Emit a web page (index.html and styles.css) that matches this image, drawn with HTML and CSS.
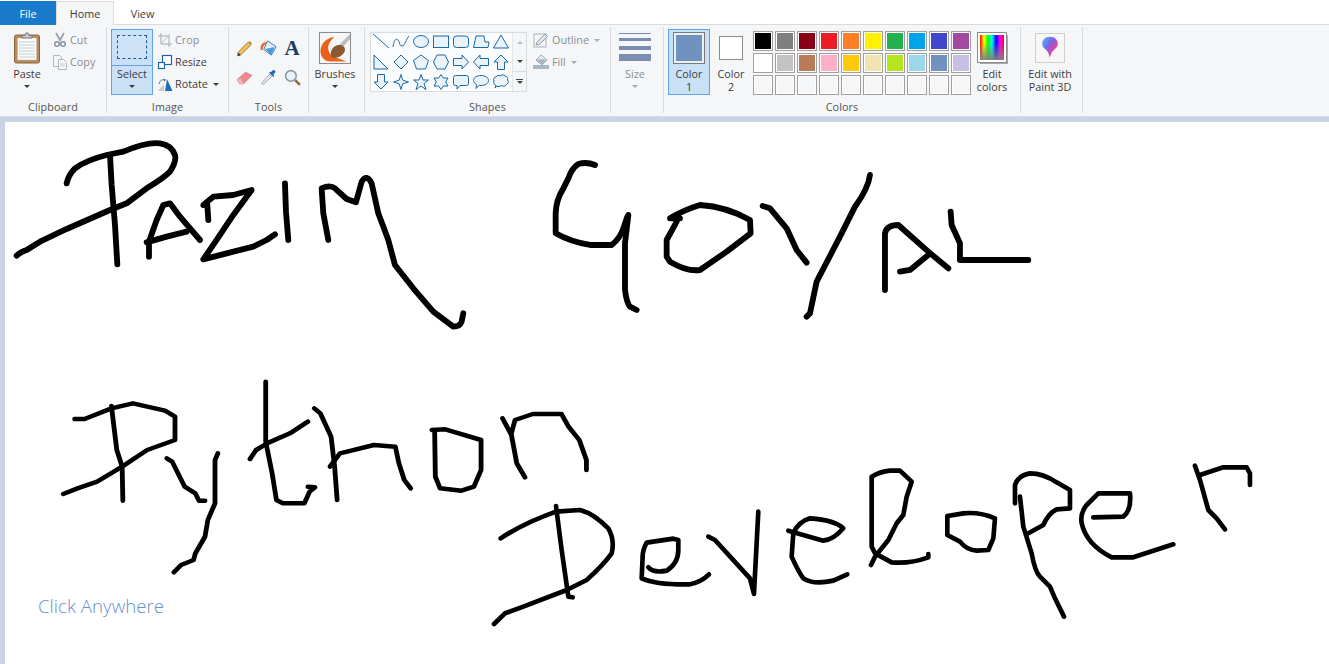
FILE: index.html
```html
<!DOCTYPE html>
<html lang="en">
<head>
<meta charset="utf-8">
<title>Untitled - Paint</title>
<link rel="stylesheet" href="styles.css">
</head>
<body>
<div class="app">
  <nav class="tabs">
    <div class="tab tab-file">File</div>
    <div class="tab tab-home">Home</div>
    <div class="tab tab-view">View</div>
  </nav>
  <div class="ribbon">
    <section class="group g-clipboard">
      <div class="group-body">
        <div class="big">
          <div class="big-icon">
            <svg width="28" height="32" viewBox="0 0 28 32"><rect x="1.500" y="3" width="25" height="28" rx="2" fill="#b98a5c" stroke="#8a6238"/><rect x="4.500" y="6" width="19" height="22" fill="#fbfbf8" stroke="#b9b9b0" stroke-width=".5"/><path d="M6 10h16M6 13h16M6 16h16M6 19h16M6 22h16M6 25h16" stroke="#c3ccd6"/><path d="M9 6V3.500h3L13 1h2l1 2.500h3V6z" fill="#c9ced4" stroke="#777"/></svg>
          </div>
          <div class="big-label">Paste</div>
          <i class="caret"></i>
        </div>
        <div class="small-col">
          <div class="small off"><svg class="ic" viewBox="0 0 16 16"><path d="M4 1l4.500 8M12 1L7.500 9" stroke="#9aa3ad" stroke-width="1.800" fill="none"/><circle cx="5" cy="12" r="2.300" fill="none" stroke="#8a95a1" stroke-width="1.500"/><circle cx="11" cy="12" r="2.300" fill="none" stroke="#8a95a1" stroke-width="1.500"/></svg><span>Cut</span></div>
          <div class="small off"><svg class="ic" viewBox="0 0 16 16"><path d="M1.500 1.500h6l2 2v9h-8z" fill="#f4f5f6" stroke="#aeb6bf"/><path d="M6.500 5.500h5l3 3v7h-8z" fill="#fafafa" stroke="#aeb6bf"/><path d="M8 10h5M8 12h5" stroke="#c4cad0"/></svg><span>Copy</span></div>
        </div>
      </div>
      <div class="group-label">Clipboard</div>
    </section>

    <section class="group g-image">
      <div class="group-body">
        <div class="big active">
          <div class="big-icon select-top"><div class="dash"></div></div>
          <div class="big-label">Select</div>
          <i class="caret"></i>
        </div>
        <div class="small-col">
          <div class="small off"><svg class="ic" viewBox="0 0 16 16"><path d="M4 1v11h11M1 4h11v11" fill="none" stroke="#9fa9b5"/><path d="M4 12L13 2" stroke="#b7bec7"/></svg><span>Crop</span></div>
          <div class="small"><svg class="ic" viewBox="0 0 16 16"><rect x="5.500" y="1.500" width="9" height="9" fill="#fff" stroke="#1e63a4" stroke-width="1.200"/><rect x="1.500" y="8.500" width="6" height="6" fill="#fff" stroke="#1e63a4" stroke-width="1.200"/></svg><span>Resize</span></div>
          <div class="small"><svg class="ic" viewBox="0 0 16 16"><path d="M1 15L7 8v7z" fill="#c7ccc9"/><path d="M10 3l5.500 12H8z" fill="#1f6fb5"/><path d="M2 8C3 4 6 3 8 4" fill="none" stroke="#2a6ea8"/><path d="M7 2.500l2 1.500-2 1.500z" fill="#2a6ea8"/></svg><span>Rotate</span><i class="caret caret-inline"></i></div>
        </div>
      </div>
      <div class="group-label">Image</div>
    </section>

    <section class="group g-tools">
      <div class="group-body">
        <div class="tool-grid">
          <svg class="tool" viewBox="0 0 16 16"><path d="M2 11.500L11.500 2l2.500 2.500L4.500 14 1.500 15z" fill="#f2c14e" stroke="#8c6b2a" stroke-width=".8"/><path d="M11.500 2l2.500 2.500 1-1.500-2-2z" fill="#d9795f"/><path d="M1.500 15l.8-3 2.200 2z" fill="#333"/></svg>
          <svg class="tool" viewBox="0 0 18 18"><path d="M8 1l9 6-5 9-8-6z" fill="#e6f0f8" stroke="#2c78b7"/><path d="M5.500 9.500l10-2-3.500 8.500z" fill="#4f9bd6"/><path d="M7 2C3 2 .5 5 .5 9c0 2.500 2.500 2.500 2.500 0 0-2 1.500-4 4-5z" fill="#e8662c"/></svg>
          <div class="tool tool-text">A</div>
          <svg class="tool" viewBox="0 0 16 16"><path d="M1 10l8-7 6 3-8 8H3.500z" fill="#ef8a90" stroke="#c96a70" stroke-width=".6"/><path d="M1 10l2.500 4H7L4.500 9z" fill="#f3b4b4"/></svg>
          <svg class="tool" viewBox="0 0 16 16"><path d="M2 14l-.5-.5L9 5l2 2-8 7.500z" fill="#e8eef2" stroke="#7a8a98" stroke-width=".7"/><path d="M8.500 3.500l4 4 1-1-1-1 2-2.500c.5-1-1-2.500-2-2L10 3l-.5-.5z" fill="#1c6db3"/></svg>
          <svg class="tool" viewBox="0 0 16 16"><circle cx="6.500" cy="6.500" r="5" fill="#e6f1fa" stroke="#8f9aa3" stroke-width="1.500"/><path d="M10.500 10.500L15 15" stroke="#8b6d45" stroke-width="2.400"/></svg>
        </div>
      </div>
      <div class="group-label">Tools</div>
    </section>

    <section class="group g-brushes">
      <div class="group-body">
        <div class="big">
          <div class="big-icon">
            <svg width="32" height="32" viewBox="0 0 32 32"><rect x=".5" y=".5" width="31" height="31" fill="#f6f6f6" stroke="#8c8c8c"/><path d="M15 5C7 6 1.500 12 1.500 19c0 6 4 10.500 10 10.500h16l-13-5c-5-3-6.500-8-4.500-12.500 1-2.500 3-4.500 5-7z" fill="#e9611c"/><path d="M31 2L19 14l3 3L31 7z" fill="#b9bec2"/><path d="M19 13c-5 1-8 6-7 11 .5 2 3 2.500 6 1.500 5-1 8-5 8-8 0-3-3-5-7-4.500z" fill="#8b5a32"/></svg>
          </div>
          <div class="big-label">Brushes</div>
          <i class="caret"></i>
        </div>
      </div>
      <div class="group-label"></div>
    </section>

    <section class="group g-shapes">
      <div class="group-body">
        <div class="gallery">
          <div class="gallery-grid">
            <svg class="shape" viewBox="0 0 16 16"><path d="M0 0L16 14"/></svg>
            <svg class="shape" viewBox="0 0 16 16"><path class="open" d="M0 13C1 6 3 4 5 6s1 6 4 6 4-7 7-10"/></svg>
            <svg class="shape" viewBox="0 0 16 16"><ellipse cx="8" cy="7.500" rx="7.500" ry="6"/></svg>
            <svg class="shape" viewBox="0 0 16 16"><rect x=".5" y="2" width="15" height="11.500"/></svg>
            <svg class="shape" viewBox="0 0 16 16"><rect x=".5" y="2" width="15" height="11.500" rx="3"/></svg>
            <svg class="shape" viewBox="0 0 16 16"><path d="M.5 13.500L3 2h8l1 6h4l-1 5.500z"/></svg>
            <svg class="shape" viewBox="0 0 16 16"><path d="M8 1l7.500 13H.5z"/></svg>
            <svg class="shape" viewBox="0 0 16 16"><path d="M1 1l14 14H1z"/></svg>
            <svg class="shape" viewBox="0 0 16 16"><path d="M8 1l7 7-7 7-7-7z"/></svg>
            <svg class="shape" viewBox="0 0 16 16"><path d="M8 1l7.500 5.500-3 8.500h-9l-3-8.500z"/></svg>
            <svg class="shape" viewBox="0 0 16 16"><path d="M4 1h8l3.500 7-3.500 7H4L.5 8z"/></svg>
            <svg class="shape" viewBox="0 0 16 16"><path d="M.5 4.500H9V1l6.500 7L9 15v-3.500H.5z"/></svg>
            <svg class="shape" viewBox="0 0 16 16"><path d="M15.500 4.500H7V1L.5 8 7 15v-3.500h8.500z"/></svg>
            <svg class="shape" viewBox="0 0 16 16"><path d="M4.500 15.500V8H1l7-7 7 7h-3.500v7.500z"/></svg>
            <svg class="shape" viewBox="0 0 16 16"><path d="M4.500.5V8H1l7 7 7-7h-3.500V.5z"/></svg>
            <svg class="shape" viewBox="0 0 16 16"><path d="M8 .5l1.800 5.700L15.500 8l-5.700 1.800L8 15.500l-1.800-5.700L.5 8l5.700-1.800z"/></svg>
            <svg class="shape" viewBox="0 0 16 16"><path d="M8 .5l2 5.500h5.500L11 9.500l2 6-5-3.500-5 3.500 2-6L.5 6H6z"/></svg>
            <svg class="shape" viewBox="0 0 16 16"><path d="M8 .5l2.300 3.500h4.700l-2.300 4 2.300 4h-4.700L8 15.500 5.700 12H1l2.300-4L1 4h4.700z"/></svg>
            <svg class="shape" viewBox="0 0 16 16"><path d="M2.500 1.500h11a2 2 0 0 1 2 2v6a2 2 0 0 1-2 2H7l-3 3.500v-3.500H2.500a2 2 0 0 1-2-2v-6a2 2 0 0 1 2-2z"/></svg>
            <svg class="shape" viewBox="0 0 16 16"><path d="M8 1.500c4 0 7.500 2 7.500 5s-3.500 5-7.500 5c-.8 0-1.500 0-2-.2L3 14.500l.5-4C1.500 9.500.5 8 .5 6.500c0-3 3.500-5 7.500-5z"/></svg>
            <svg class="shape" viewBox="0 0 16 16"><path d="M3 3c1-2 3-2 4-1 1-1.500 4-1.500 5 0 2 0 3.500 2 2.500 4 1.500 1 1 4-1 4.500-1 2-4 2-5.500 1-1 1-3 1.500-4 .5L2 14l1-2.500C1 11 0 8.500 1 7 0 5 1 3 3 3z"/></svg>
          </div>
          <div class="gallery-scroll">
            <span class="sc"><i class="tri-up"></i></span>
            <span class="sc"><i class="tri-down"></i></span>
            <span class="sc sc-more"><i class="more-bar"></i><i class="tri-down"></i></span>
          </div>
        </div>
        <div class="small-col outline-col">
          <div class="small off"><svg class="ic" viewBox="0 0 16 16"><rect x="1" y="2" width="12" height="13" fill="#f4f6f8" stroke="#a8b2bc"/><path d="M3 13l1-3 8-8 2.500 2.500-8 8z" fill="#dfe4e8" stroke="#94a0ab"/></svg><span>Outline</span><i class="caret caret-inline caret-off"></i></div>
          <div class="small off"><svg class="ic" viewBox="0 0 16 16"><path d="M8 1l6 5-5 5-6-5z" fill="#e8ecef" stroke="#9da8b3"/><path d="M0 11h16v4H0z" fill="#a9b6c4"/><path d="M3 6l6-1 4 1-4 5z" fill="#a9b6c4"/></svg><span>Fill</span><i class="caret caret-inline caret-off"></i></div>
        </div>
      </div>
      <div class="group-label">Shapes</div>
    </section>

    <section class="group g-size">
      <div class="group-body">
        <div class="big off">
          <div class="big-icon size-icon"><i class="sz s1"></i><i class="sz s2"></i><i class="sz s3"></i><i class="sz s4"></i></div>
          <div class="big-label">Size</div>
          <i class="caret caret-off"></i>
        </div>
      </div>
      <div class="group-label"></div>
    </section>

    <section class="group g-colors">
      <div class="group-body">
        <div class="big active">
          <div class="big-icon"><div class="swatch-1"></div></div>
          <div class="big-label">Color<br>1</div>
        </div>
        <div class="big">
          <div class="big-icon"><div class="swatch-2"></div></div>
          <div class="big-label">Color<br>2</div>
        </div>
        <div class="palette">
          <i class="cell c01"></i><i class="cell c02"></i><i class="cell c03"></i><i class="cell c04"></i><i class="cell c05"></i><i class="cell c06"></i><i class="cell c07"></i><i class="cell c08"></i><i class="cell c09"></i><i class="cell c10"></i>
          <i class="cell c11"></i><i class="cell c12"></i><i class="cell c13"></i><i class="cell c14"></i><i class="cell c15"></i><i class="cell c16"></i><i class="cell c17"></i><i class="cell c18"></i><i class="cell c19"></i><i class="cell c20"></i>
          <i class="cell"></i><i class="cell"></i><i class="cell"></i><i class="cell"></i><i class="cell"></i><i class="cell"></i><i class="cell"></i><i class="cell"></i><i class="cell"></i><i class="cell"></i>
        </div>
        <div class="big">
          <div class="big-icon"><div class="rainbow"></div></div>
          <div class="big-label">Edit<br>colors</div>
        </div>
      </div>
      <div class="group-label">Colors</div>
    </section>

    <section class="group g-3d">
      <div class="group-body">
        <div class="big big-wide">
          <div class="big-icon">
            <div class="p3d"><svg width="18" height="25" viewBox="0 0 22 28"><defs><linearGradient id="p3" x1="0" y1="0" x2="1" y2="1"><stop offset="0" stop-color="#3fc4ee"/><stop offset=".4" stop-color="#7a63ea"/><stop offset=".7" stop-color="#ee3f9c"/><stop offset="1" stop-color="#f5a623"/></linearGradient></defs><path d="M11 1c5.500 0 9.500 3.500 9.500 8.500 0 5-5 7-7.500 11-.8 1.500-1.500 3.500-2.500 6-.5-3-1-5-2-7C6 16 1.500 14 1.500 9.500 1.500 4.500 5.500 1 11 1z" fill="url(#p3)"/></svg></div>
          </div>
          <div class="big-label">Edit with<br>Paint 3D</div>
        </div>
      </div>
      <div class="group-label"></div>
    </section>
  </div>

  <main class="workspace">
    <div class="canvas">
      <svg class="drawing" width="1324" height="542" viewBox="5 122 1324 542">
        <g class="ink ink-5" transform="translate(0 125) scale(.3333)">
          <path d="M50 392Q60 382 80 375L120 350 200 312 330 255 380 235 440 190Q490 160 510 140 530 110 525 90 515 60 480 55 440 50 370 80L320 90Q260 105 225 130 205 150 200 175"/>
          <path d="M330 90L335 180 345 300 352 418"/>
          <path d="M447 395L447 350 470 285 490 240 510 235 540 275 600 345"/>
          <path d="M440 352L500 335 560 320"/>
          <path d="M625 285L622 240 610 240 640 215 700 210 755 195 700 270 650 345 610 403 680 385 760 365 800 345 825 328"/>
          <path d="M855 175L858 260 865 345"/>
          <path d="M985 345L970 265 965 190Q990 178 1005 190L1040 222 1068 232 1085 170Q1100 145 1115 175L1135 265 1165 345 1185 420 1240 490 1300 560 1360 605Q1380 605 1385 590L1390 565"/>
        </g>
        <g class="ink ink-5" transform="translate(540 150) scale(.3333)">
          <path d="M165 45Q140 35 115 42 95 55 85 85L70 115Q48 150 47 190L47 250Q90 275 150 285L215 285Q240 265 250 235L262 200"/>
          <path d="M265 195L255 280 255 420Q260 460 270 470L290 480"/>
          <path d="M420 205L390 205Q430 180 480 165 560 170 630 210L632 250 560 305 480 360Q440 365 390 335L380 320 380 270 410 215"/>
          <path d="M668 168L690 175 740 235 770 300 800 338"/>
          <path d="M990 75Q985 115 945 170L900 260 830 395 810 490 800 500"/>
          <path d="M1035 420L1035 250Q1040 225 1075 225L1165 305 1225 355"/>
          <path d="M1080 365L1110 360 1165 315"/>
          <path d="M1232 185L1235 225 1260 280 1260 330 1465 330"/>
        </g>
        <g class="ink ink-p" transform="translate(40 370) scale(.35714 .3333)">
          <path d="M97 147L125 147 200 115 260 100 350 122 378 140 378 210 300 240 230 290 160 335 105 355 65 372"/>
          <path d="M200 108L215 240 230 290 232 392"/>
          <path d="M355 265L370 275 405 350 435 370 445 392 462 392"/>
          <path d="M498 250L490 270 490 400 470 450 462 500 435 550 430 570 395 585 375 607"/>
          <path d="M632 35L632 215 650 310 662 390 680 400 740 400 755 365 770 352 750 350"/>
          <path d="M588 267L605 240 640 218 700 190 750 155"/>
          <path d="M768 115L785 130 815 200 825 290 832 390"/>
          <path d="M812 290L840 250 935 225 995 230 1005 280 1020 330 1038 355"/>
          <path d="M1097 180L1135 178 1235 210 1235 300 1215 350 1180 362 1120 355 1107 320 1105 180"/>
          <path d="M1295 145L1320 195 1335 280 1358 322"/>
          <path d="M1320 190L1330 150 1380 132 1460 132 1480 170 1510 210 1530 270 1530 300"/>
        </g>
        <g class="ink ink-4" transform="translate(480 450) scale(.3333)">
          <path d="M62 265Q130 220 228 185L300 180Q340 190 385 235 405 270 395 310 370 345 320 390L260 420 130 470 75 490 42 522"/>
          <path d="M228 168L245 300 265 440 278 442"/>
          <path d="M505 352Q520 370 560 362 595 340 595 300L595 270 580 266 500 278Q488 300 488 320L485 385Q530 405 630 403 665 395 687 373"/>
          <path d="M685 260L705 270 810 385 822 432 835 185"/>
          <path d="M925 242L1030 272Q1060 270 1090 235 1065 210 990 205 955 215 940 250L935 320Q955 365 970 385 1000 405 1060 392L1102 373"/>
        </g>
        <g class="ink ink-4" transform="translate(860 450) scale(.3333)">
          <path d="M205 312L205 322Q150 342 95 337L45 310 35 290 35 80Q60 65 90 62L120 62 155 95 140 140 130 195 110 220 85 270 45 320 33 345"/>
          <path d="M262 198L262 255 300 275Q320 300 350 302L385 300 400 265 405 205Q360 185 310 190L262 198"/>
          <path d="M465 160L465 105Q475 75 510 70 550 70 590 97L630 120 630 175 590 178Q565 190 550 225L505 250"/>
          <path d="M480 140L490 230 515 310Q525 365 540 380L570 410 585 445 612 500"/>
          <path d="M700 202L790 200Q815 180 810 130L715 130 680 165Q660 190 665 220 680 285 755 322L820 322 940 283"/>
          <path d="M1005 47L1020 90 1045 180 1070 205 1095 238"/>
          <path d="M1020 75L1090 52 1160 52 1170 70 1170 105"/>
        </g>
      </svg>
      <div class="click-anywhere">Click Anywhere</div>
    </div>
  </main>
</div>
</body>
</html>
```
FILE: styles.css
```css
* { box-sizing: border-box; }
html, body { margin: 0; padding: 0; height: 100%; overflow: hidden; }
body { font-family: "Open Sans", "Noto Sans", sans-serif; font-size: 10.8px; color: #3c3c3c; background: #fff; }
.app { display: flex; flex-direction: column; height: 100vh; }

/* tabs */
.tabs { display: flex; height: 25px; padding-top: 1px; background: #fff; border-bottom: 1px solid #dadbdc; flex: none; }
.tab { display: flex; align-items: center; justify-content: center; height: 24px; }
.tab-file { width: 56px; background: #1979ca; color: #fff; }
.tab-home { width: 58px; background: #f5f6f7; border: 1px solid #dadbdc; border-bottom: none; height: 24px; margin-bottom: -1px; }
.tab-view { width: 57px; }

/* ribbon */
.ribbon { display: flex; height: 91px; padding-top: 2px; background: #f5f6f7; flex: none; }
.group { display: flex; flex-direction: column; height: 86px; border-right: 1px solid #dadbdc; flex: none; }
.group-body { display: flex; height: 72px; padding-top: 2px; }
.group-label { height: 14px; line-height: 16px; text-align: center; color: #555; letter-spacing: .1px; }
.g-clipboard { width: 107px; }
.g-image { width: 122px; }
.g-tools { width: 80px; }
.g-brushes { width: 56px; }
.g-shapes { width: 246px; }
.g-size { width: 53px; }
.g-colors { width: 357px; }
.g-3d { width: 62px; }

.g-clipboard .group-body { padding-left: 6px; }
.g-clipboard .small-col { margin-left: 4px; }
.g-image .group-body { padding-left: 4px; }
.g-image .small-col { margin-left: 4px; }
.g-brushes .group-body { padding-left: 5px; }
.g-shapes .group-body { padding-left: 5px; }
.g-size .group-body { padding-left: 3px; }
.g-colors .group-body { padding-left: 4px; }

/* big buttons */
.big { display: flex; flex-direction: column; align-items: center; width: 42px; height: 66px; flex: none; }
.big-wide { width: 58px; }
.big-icon { display: flex; justify-content: center; align-items: center; width: 100%; height: 38px; padding-bottom: 1px; flex: none; }
.big-label { line-height: 13px; text-align: center; white-space: nowrap; }
.active { background: #c9e0f7; outline: 1px solid #62a3e6; outline-offset: -1px; }
.select-top { border-bottom: 1px solid #62a3e6; height: 37px; margin-bottom: 1px; padding-bottom: 0; }
.dash { width: 30px; height: 24px; border: 1px dashed #1d5c9c; background: #cfe3f8; }
.off { color: #8a8f96; }

.caret { display: block; width: 0; height: 0; margin-top: 5px; border-left: 3px solid transparent; border-right: 3px solid transparent; border-top: 3px solid #3c3c3c; }
.caret-off { border-top-color: #a5a9ae; }
.caret-inline { margin: 2px 0 0 5px; }

/* small rows */
.small-col { display: flex; flex-direction: column; flex: none; }
.small { display: flex; align-items: center; height: 22px; padding-bottom: 1px; }
.ic { width: 16px; height: 16px; margin-right: 2px; flex: none; }
.outline-col .ic { margin-right: 3px; }

/* tools */
.tool-grid { display: grid; grid-template-columns: repeat(3, 24px); grid-template-rows: repeat(2, 29px); margin: 5px 0 0 3px; place-items: center; }
.tool { width: 17px; height: 17px; }
.tool-text { font: bold 21px/17px "Liberation Serif", serif; color: #1e3a63; text-align: center; }

/* shapes */
.gallery { display: flex; width: 157px; height: 60px; margin-top: 3px; background: #fafcfd; border: 1px solid #dadbdc; flex: none; }
.gallery-grid { display: grid; grid-template-columns: repeat(7, 20px); grid-template-rows: repeat(3, 20px); align-content: center; place-items: center; height: 58px; width: 141px; }
.shape { width: 16px; height: 16px; overflow: visible; }
.shape path, .shape ellipse, .shape rect { fill: #eaf3fa; stroke: #1a69a8; stroke-width: 1; }
.shape .open { fill: none; }
.gallery-scroll { display: flex; flex-direction: column; flex: 1; border-left: 1px solid #e4e5e6; background: #f5f6f7; }
.sc { display: flex; flex-direction: column; align-items: center; justify-content: center; height: 19px; gap: 1px; }
.sc-more { border-top: 1px solid #dadbdc; height: 20px; }
.tri-up { width: 0; height: 0; border: 3px solid transparent; border-top: none; border-bottom: 3px solid #b8bcc0; }
.tri-down { width: 0; height: 0; border: 3px solid transparent; border-bottom: none; border-top: 3px solid #444; }
.more-bar { width: 7px; height: 1px; background: #444; }
.outline-col { margin-left: 6px; }

/* size */
.size-icon { flex-direction: column; justify-content: flex-start; align-items: center; padding: 4px 0 0; }
.sz { display: block; width: 32px; background: #7b8db0; flex: none; }
.s1 { height: 1px; }
.s2 { height: 3px; margin-top: 4px; }
.s3 { height: 4px; margin-top: 5px; }
.s4 { height: 7px; margin-top: 4px; }

/* colours */
.swatch-1 { width: 32px; height: 32px; background: #7092be; border: 3px solid #e9f1f9; outline: 1px solid #7a7a7a; outline-offset: -1px; }
.swatch-2 { width: 24px; height: 24px; background: #fff; border: 1px solid #8a8a8a; }
.palette { display: grid; grid-template-columns: repeat(10, 20px); grid-auto-rows: 20px; gap: 2px; margin: 2px 0 0 1px; height: 64px; flex: none; }
.cell { display: block; width: 20px; height: 20px; border: 1px solid #a0a0a0; box-shadow: inset 0 0 0 1px #fff; background: #f5f6f7; }
.c01 { background: #000; } .c02 { background: #7f7f7f; } .c03 { background: #880015; } .c04 { background: #ed1c24; } .c05 { background: #ff7f27; }
.c06 { background: #fff200; } .c07 { background: #22b14c; } .c08 { background: #00a2e8; } .c09 { background: #3f48cc; } .c10 { background: #a349a4; }
.c11 { background: #fff; } .c12 { background: #c3c3c3; } .c13 { background: #b97a57; } .c14 { background: #ffaec9; } .c15 { background: #ffc90e; }
.c16 { background: #efe4b0; } .c17 { background: #b5e61d; } .c18 { background: #99d9ea; } .c19 { background: #7092be; } .c20 { background: #c8bfe7; }
.rainbow { width: 28px; height: 29px; border: 2px solid #fff; outline: 1px solid #8c8c8c; background: linear-gradient(to bottom, rgba(128,128,128,0) 30%, rgba(128,128,128,.95) 100%), linear-gradient(to right, #f00, #ff0, #0f0, #0ff, #00f, #f0f, #f00); box-shadow: 2px 2px 0 #a8a8a8; }

/* paint 3d */
.p3d { display: flex; align-items: center; justify-content: center; width: 30px; height: 30px; background: #f7f7f7; border: 1px solid #cfcfcf; }

/* canvas */
.workspace { flex: 1; min-height: 0; padding: 5px 0 0 5px; background: #c9d3e5; border-top: 1px solid #d9dce2; }
.canvas { position: relative; height: 100%; background: #fff; overflow: hidden; }
.drawing { display: block; }
.ink { fill: none; stroke: #000; stroke-linecap: round; stroke-linejoin: round; }
.ink-5 { stroke-width: 17.5; }
.ink-4 { stroke-width: 14; }
.ink-p { stroke-width: 13.5; }
.click-anywhere { position: absolute; left: 33px; top: 470px; font-family: "Open Sans", sans-serif; font-weight: 300; font-size: 18.7px; line-height: 28px; color: #6b8fc9; }
```
